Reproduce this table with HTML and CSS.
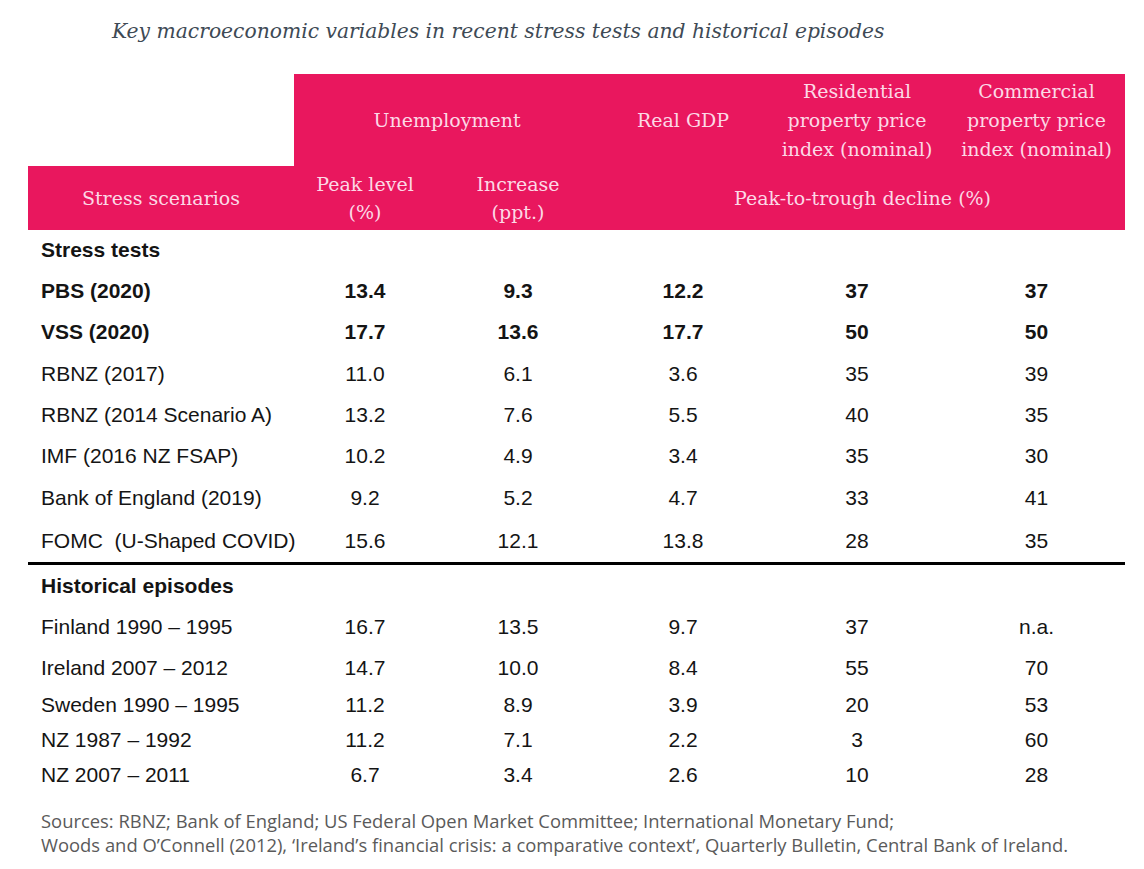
FILE: index.html
```html
<!DOCTYPE html>
<html lang="en">
<head>
<meta charset="utf-8">
<title>Key macroeconomic variables</title>
<link rel="stylesheet" href="styles.css">
</head>
<body>
<div class="page">
  <h1 class="title">Key macroeconomic variables in recent stress tests and historical episodes</h1>

  <div class="table">
    <div class="head">
      <div class="blank"></div>
      <div class="hc span2 top">Unemployment</div>
      <div class="hc top">Real GDP</div>
      <div class="hc top">Residential<br>property price<br>index (nominal)</div>
      <div class="hc top">Commercial<br>property price<br>index (nominal)</div>

      <div class="hc bot">Stress scenarios</div>
      <div class="hc bot">Peak level<br>(%)</div>
      <div class="hc bot">Increase<br>(ppt.)</div>
      <div class="hc bot span3">Peak-to-trough decline (%)</div>
    </div>

    <div class="body">
      <div class="section">Stress tests</div>

      <div class="row bold"><span class="lbl">PBS (2020)</span><span>13.4</span><span>9.3</span><span>12.2</span><span>37</span><span>37</span></div>
      <div class="row bold"><span class="lbl">VSS (2020)</span><span>17.7</span><span>13.6</span><span>17.7</span><span>50</span><span>50</span></div>
      <div class="row"><span class="lbl">RBNZ (2017)</span><span>11.0</span><span>6.1</span><span>3.6</span><span>35</span><span>39</span></div>
      <div class="row"><span class="lbl">RBNZ (2014 Scenario A)</span><span>13.2</span><span>7.6</span><span>5.5</span><span>40</span><span>35</span></div>
      <div class="row"><span class="lbl">IMF (2016 NZ FSAP)</span><span>10.2</span><span>4.9</span><span>3.4</span><span>35</span><span>30</span></div>
      <div class="row"><span class="lbl">Bank of England (2019)</span><span>9.2</span><span>5.2</span><span>4.7</span><span>33</span><span>41</span></div>
      <div class="row"><span class="lbl">FOMC&nbsp; (U-Shaped COVID)</span><span>15.6</span><span>12.1</span><span>13.8</span><span>28</span><span>35</span></div>

      <div class="rule"></div>

      <div class="section">Historical episodes</div>
      <div class="row"><span class="lbl">Finland 1990 – 1995</span><span>16.7</span><span>13.5</span><span>9.7</span><span>37</span><span>n.a.</span></div>
      <div class="row"><span class="lbl">Ireland 2007 – 2012</span><span>14.7</span><span>10.0</span><span>8.4</span><span>55</span><span>70</span></div>
      <div class="row"><span class="lbl">Sweden 1990 – 1995</span><span>11.2</span><span>8.9</span><span>3.9</span><span>20</span><span>53</span></div>
      <div class="row"><span class="lbl">NZ 1987 – 1992</span><span>11.2</span><span>7.1</span><span>2.2</span><span>3</span><span>60</span></div>
      <div class="row"><span class="lbl">NZ 2007 – 2011</span><span>6.7</span><span>3.4</span><span>2.6</span><span>10</span><span>28</span></div>
    </div>
  </div>

  <p class="sources">Sources: RBNZ; Bank of England; US Federal Open Market Committee; International Monetary Fund;<br>Woods and O’Connell (2012), ‘Ireland’s financial crisis: a comparative context’, Quarterly Bulletin, Central Bank of Ireland.</p>
</div>
</body>
</html>
```

FILE: styles.css
```css
html, body {
  margin: 0;
  padding: 0;
  background: #ffffff;
}

.page {
  width: 1144px;
  height: 869px;
  padding-left: 28px;
  box-sizing: border-box;
  overflow: hidden;
}

.title {
  margin: 0;
  padding: 16px 0 0 84px;
  height: 74px;
  box-sizing: border-box;
  font-family: "DejaVu Serif", "Liberation Serif", serif;
  font-style: italic;
  font-weight: normal;
  font-size: 20.3px;
  line-height: 30px;
  color: #3e4a55;
}

.table {
  width: 1097px;
}

.head {
  display: grid;
  grid-template-columns: 266px 142px 164px 166px 182px 177px;
  grid-template-rows: 92px 64px;
  font-family: "DejaVu Serif", "Liberation Serif", serif;
  font-size: 19px;
  color: #fcd9e6;
}

.blank {
  background: #ffffff;
}

.hc {
  background: #e9175e;
  display: flex;
  align-items: center;
  justify-content: center;
  text-align: center;
}

.hc.top {
  line-height: 29px;
}

.hc.bot {
  line-height: 28px;
}

.span2 {
  grid-column: span 2;
}

.span3 {
  grid-column: span 3;
}

.body {
  display: grid;
  grid-template-columns: 266px 142px 164px 166px 182px 177px;
  grid-template-rows: 40px 41px 42px 42px 40px 41px 44px 42px 3px 41px 42px 39px 35px 36px 34px;
  font-family: "Liberation Sans", Arial, sans-serif;
  font-size: 21px;
  color: #141414;
}

.row {
  display: contents;
}

.row > span {
  display: flex;
  align-items: center;
  justify-content: center;
  white-space: nowrap;
}

.row > .lbl {
  justify-content: flex-start;
  padding-left: 13px;
}

.bold > span {
  font-weight: bold;
}

.section {
  grid-column: 1 / -1;
  display: flex;
  align-items: center;
  padding-left: 13px;
  font-weight: bold;
}

.rule {
  grid-column: 1 / -1;
  background: #000000;
}

.sources {
  margin: 17px 0 0 13px;
  font-family: "Open Sans", "Liberation Sans", sans-serif;
  font-size: 18.4px;
  line-height: 24px;
  color: #5a5a5a;
}
```
